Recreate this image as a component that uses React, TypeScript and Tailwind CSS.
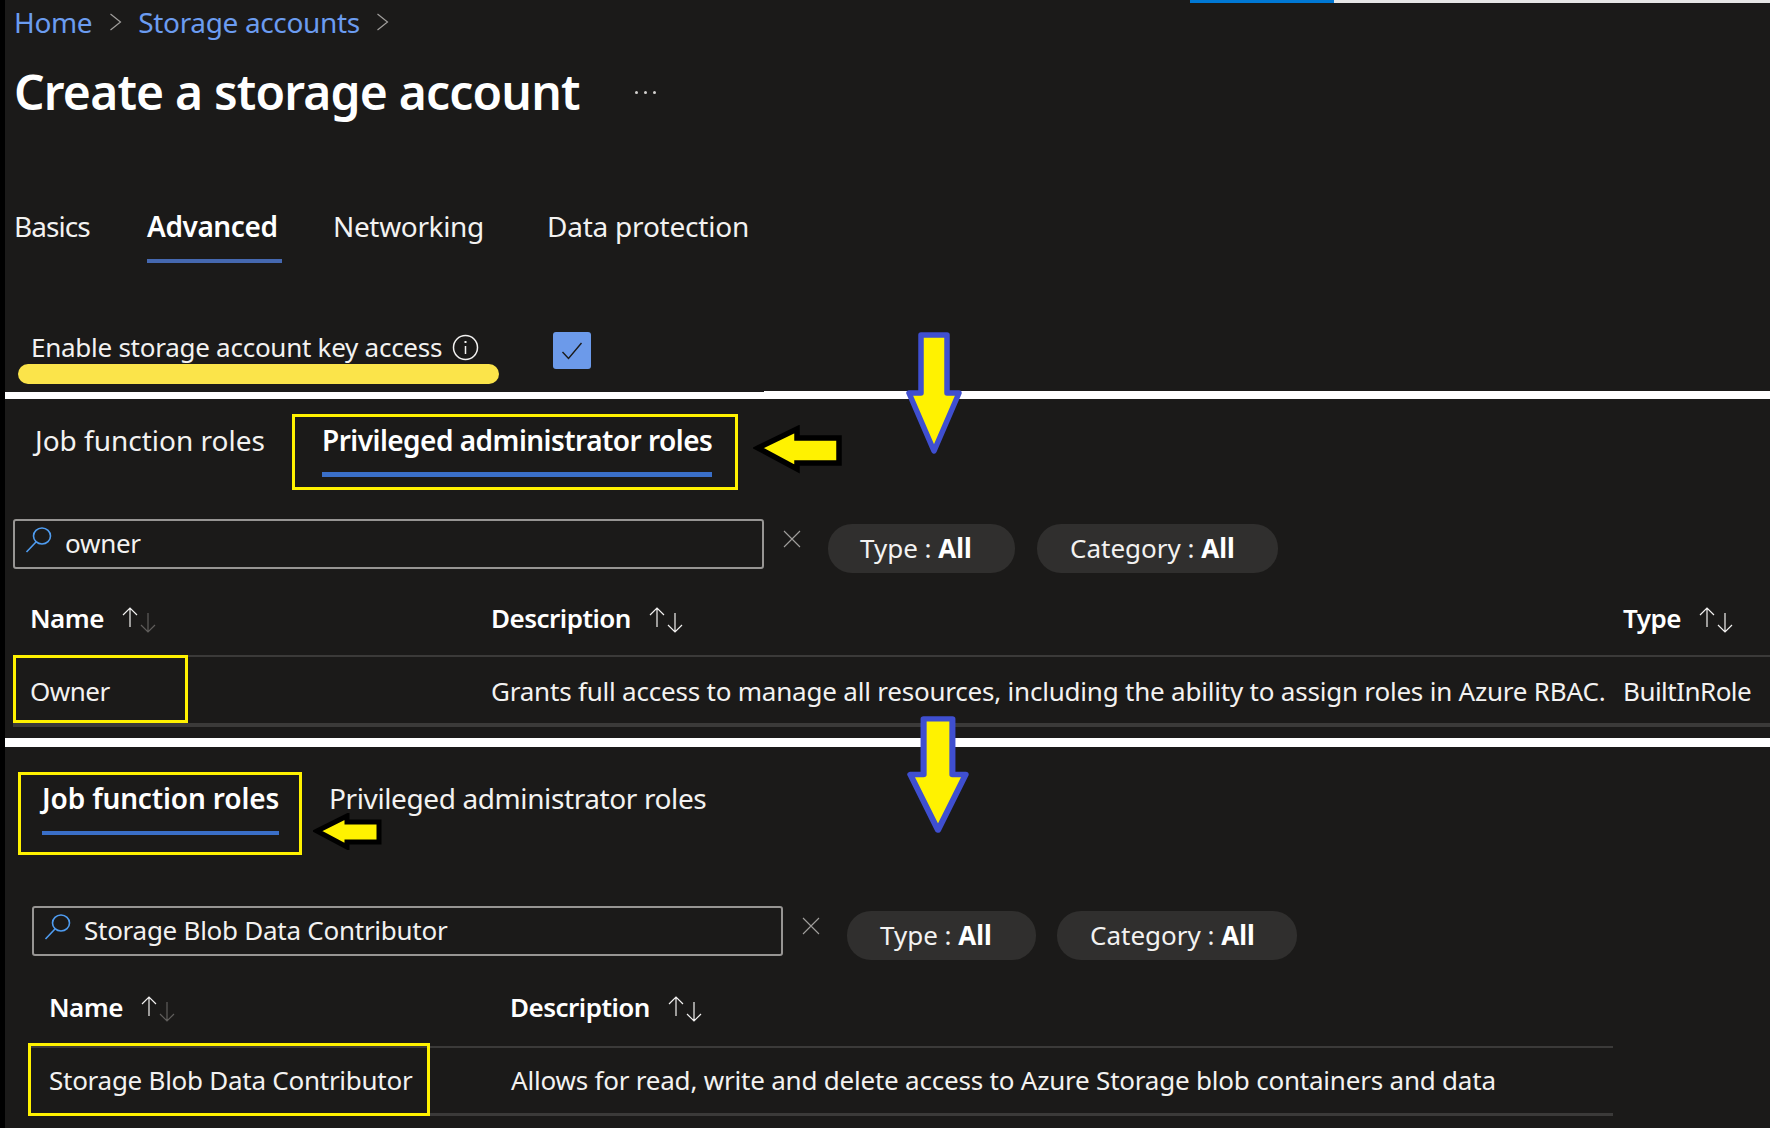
const Chevron = ({ className }: { className: string }) => (
  <svg className={className} width="13" height="18" viewBox="0 0 13 18" fill="none" stroke="#a19f9d" strokeWidth="1.2">
    <path d="M1.5 1 L11.5 9 L1.5 17" />
  </svg>
);

const Sort = ({ dim }: { dim?: boolean }) => (
  <svg className="ml-[17px] mt-[2px]" width="35" height="26" viewBox="0 0 35 26" fill="none" strokeWidth="1.2">
    <path d="M9 20 V1 M2 8 L9 1 L16 8" stroke="#f3f2f1" />
    <path d="M27 6 V25 M20 18 L27 25 L34 18" stroke={dim ? "#605e5c" : "#f3f2f1"} />
  </svg>
);

const SearchGlyph = () => (
  <svg className="absolute left-[10px] top-[6px]" width="28" height="26" viewBox="0 0 28 26" fill="none" stroke="#4f9cf0" strokeWidth="1.6">
    <ellipse cx="17" cy="9" rx="8.5" ry="8" />
    <path d="M11 15 L1.5 25" />
  </svg>
);

const Clear = () => (
  <svg width="18" height="18" viewBox="0 0 18 18" fill="none" stroke="#a19f9d" strokeWidth="1.1">
    <path d="M1 1 L17 17 M17 1 L1 17" />
  </svg>
);

const Pill = ({ label, className }: { label: string; className: string }) => (
  <div className={`flex h-[49px] items-center rounded-[24px] bg-[#302f2e] text-[26px] text-[#f3f2f1] ${className}`}>
    <span>{label} :&nbsp;</span>
    <span className="font-bold text-white">All</span>
  </div>
);

const Search = ({ value, className }: { value: string; className: string }) => (
  <div className={`relative flex h-[50px] w-[751px] items-center rounded-[3px] border-2 border-[#979593] pb-[2px] pl-[50px] text-[26px] tracking-[-0.01em] text-[#f3f2f1] ${className}`}>
    <SearchGlyph />
    <span>{value}</span>
  </div>
);

const Head = ({ label, dim, className }: { label: string; dim?: boolean; className: string }) => (
  <div className={`flex items-center text-[26px] font-semibold tracking-[-0.02em] text-white ${className}`}>
    <span>{label}</span>
    <Sort dim={dim} />
  </div>
);

const DownArrow = ({ className }: { className: string }) => (
  <svg className={className} viewBox="0 0 56 122" preserveAspectRatio="none" fill="#fff200" stroke="#3f4fd0" strokeWidth="5.5" strokeLinejoin="round">
    <path d="M15 3 H41 V61 H53 L28 119 L3 61 H15 Z" />
  </svg>
);

export default function App() {
  return (
    <div className="flex h-[1128px] w-[1770px] flex-col overflow-hidden border-l-[5px] border-black bg-[#1b1a19] font-['Noto_Sans',sans-serif] text-[#f3f2f1]">
      {/* Top section */}
      <section className="relative h-[392px] shrink-0">
        <div className="flex h-[3px]">
          <div className="w-[1185px]" />
          <div className="w-[144px] bg-[#0078d4]" />
          <div className="flex-1 bg-[#e6e6e6]" />
        </div>
        <div className="flex h-[38px] items-center pl-[9px] text-[28px] leading-[38px] tracking-[-0.0125em] text-[#6b9cf0]">
          <span>Home</span>
          <Chevron className="ml-[17px]" />
          <span className="ml-[16px]">Storage accounts</span>
          <Chevron className="ml-[16px]" />
        </div>
        <div className="flex h-[101px] items-center pl-[9px]">
          <h1 className="text-[48px] font-semibold leading-[60px] tracking-[-0.017em] text-white">Create a storage account</h1>
          <span className="ml-[55px] flex gap-[6px] pt-[2px]">
            <i className="h-[3px] w-[3px] rounded-full bg-[#d2d0ce]" />
            <i className="h-[3px] w-[3px] rounded-full bg-[#d2d0ce]" />
            <i className="h-[3px] w-[3px] rounded-full bg-[#d2d0ce]" />
          </span>
        </div>
        <div className="mt-[62px] flex pl-[9px] text-[28px] leading-[44px]">
          <div className="w-[133px] tracking-[-0.033em]">Basics</div>
          <div className="flex w-[186px] flex-col">
            <span className="font-semibold tracking-[-0.015em] text-white">Advanced</span>
            <i className="mt-[11px] h-[4px] w-[135px] bg-[#4568b0]" />
          </div>
          <div className="w-[214px] tracking-[-0.0125em]">Networking</div>
          <div className="tracking-[-0.008em]">Data protection</div>
        </div>
        <div className="absolute left-[26px] top-[325px] flex h-[44px] items-center text-[26px] leading-[44px] tracking-[-0.01em]">
          <span>Enable storage account key access</span>
          <svg className="ml-[10px]" width="27" height="27" viewBox="0 0 27 27" fill="none" stroke="#f3f2f1" strokeWidth="1.5">
            <circle cx="13.5" cy="13.5" r="12" />
            <path d="M13.5 12 V20" />
            <path d="M13.5 7 V9" strokeWidth="2" />
          </svg>
        </div>
        <div className="absolute left-[548px] top-[332px] flex h-[37px] w-[38px] items-center justify-center rounded-[3px] bg-[#6c9aea]">
          <svg width="22" height="18" viewBox="0 0 22 18" fill="none" stroke="#1b1a19" strokeWidth="1.4">
            <path d="M1.5 10 L7.5 16.5 L20.5 1" />
          </svg>
        </div>
        <div className="absolute left-[13px] top-[364px] h-[20px] w-[481px] rounded-full bg-[#fbe44a]" />
        <div className="absolute bottom-0 left-[759px] right-0 h-[1px] bg-white" />
        <DownArrow className="absolute left-[901px] top-[332px] z-10 h-[122px] w-[56px]" />
      </section>

      <div className="h-[7px] shrink-0 bg-white" />

      {/* Privileged section */}
      <section className="relative h-[339px] shrink-0">
        <div className="flex items-start pt-[15px] pl-[30px] text-[28px] leading-[40px]">
          <div className="mt-[6px] w-[257px]">Job function roles</div>
          <div className="flex h-[76px] w-[446px] flex-col border-[3px] border-[#fff200] pl-[27px]">
            <span className="mt-[3px] font-semibold tracking-[-0.019em] text-white">Privileged administrator roles</span>
            <i className="mt-[12px] h-[5px] w-[390px] bg-[#3a6fc8]" />
          </div>
        </div>
        <div className="mt-[29px] flex items-start pl-[8px]">
          <Search value="owner" className="" />
          <div className="ml-[19px] mt-[11px]"><Clear /></div>
          <Pill label="Type" className="ml-[27px] mt-[5px] w-[187px] pl-[32px]" />
          <Pill label="Category" className="ml-[22px] mt-[5px] w-[241px] pl-[33px]" />
        </div>
        <div className="flex h-[82px] items-start pt-[26px] pl-[25px]">
          <Head label="Name" dim className="w-[461px]" />
          <Head label="Description" className="w-[1132px]" />
          <Head label="Type" className="" />
        </div>
        <div className="ml-[8px] h-[2px] bg-[#3b3a39]" />
        <div className="flex h-[66px] items-center pt-[2px] pl-[25px] text-[26px]">
          <div className="w-[461px] tracking-[-0.02em]">Owner</div>
          <div className="w-[1132px] tracking-[-0.008em]">Grants full access to manage all resources, including the ability to assign roles in Azure RBAC.</div>
          <div className="tracking-[-0.02em]">BuiltInRole</div>
        </div>
        <div className="ml-[8px] h-[4px] bg-[#3b3a39]" />
        <div className="absolute left-[8px] top-[256px] h-[68px] w-[175px] border-[3px] border-[#fff200]" />
        <svg className="absolute left-[748px] top-[26px]" width="90" height="49" viewBox="0 0 90 49" fill="#fff200" stroke="#000" strokeWidth="5.5">
          <path d="M5 23 L44 4 V13 H86 V38 H44 V44 Z" />
        </svg>
      </section>

      <div className="relative h-[9px] shrink-0 bg-white">
        <DownArrow className="absolute left-[902px] -top-[22px] z-10 h-[117px] w-[62px]" />
      </div>

      {/* Job function section */}
      <section className="relative flex-1">
        <div className="flex items-start pt-[25px] pl-[13px] text-[28px] leading-[40px]">
          <div className="flex h-[83px] w-[284px] flex-col border-[3px] border-[#fff200] pl-[21px]">
            <span className="mt-[3px] font-semibold tracking-[-0.005em] text-white">Job function roles</span>
            <i className="mt-[13px] h-[4px] w-[237px] bg-[#3a6fc8]" />
          </div>
          <div className="ml-[27px] mt-[6px] tracking-[-0.014em]">Privileged administrator roles</div>
        </div>
        <div className="mt-[51px] flex items-start pl-[27px]">
          <Search value="Storage Blob Data Contributor" className="" />
          <div className="ml-[19px] mt-[11px]"><Clear /></div>
          <Pill label="Type" className="ml-[27px] mt-[5px] w-[189px] pl-[33px]" />
          <Pill label="Category" className="ml-[21px] mt-[5px] w-[240px] pl-[33px]" />
        </div>
        <div className="flex h-[86px] items-start pt-[28px] pl-[44px]">
          <Head label="Name" dim className="w-[461px]" />
          <Head label="Description" className="" />
        </div>
        <div className="ml-[23px] h-[2px] w-[1585px] bg-[#3b3a39]" />
        <div className="flex h-[65px] w-[1608px] items-center pl-[44px] text-[26px]">
          <div className="w-[462px] tracking-[-0.01em]">Storage Blob Data Contributor</div>
          <div className="tracking-[-0.008em]">Allows for read, write and delete access to Azure Storage blob containers and data</div>
        </div>
        <div className="ml-[23px] h-[3px] w-[1585px] bg-[#3b3a39]" />
        <div className="absolute left-[23px] top-[296px] h-[73px] w-[402px] border-[3px] border-[#fff200]" />
        <svg className="absolute left-[308px] top-[66px]" width="70" height="37" viewBox="0 0 70 37" fill="#fff200" stroke="#000" strokeWidth="5">
          <path d="M4 18 L34 3 V9 H66 V29 H34 V34 Z" />
        </svg>
      </section>
    </div>
  );
}
